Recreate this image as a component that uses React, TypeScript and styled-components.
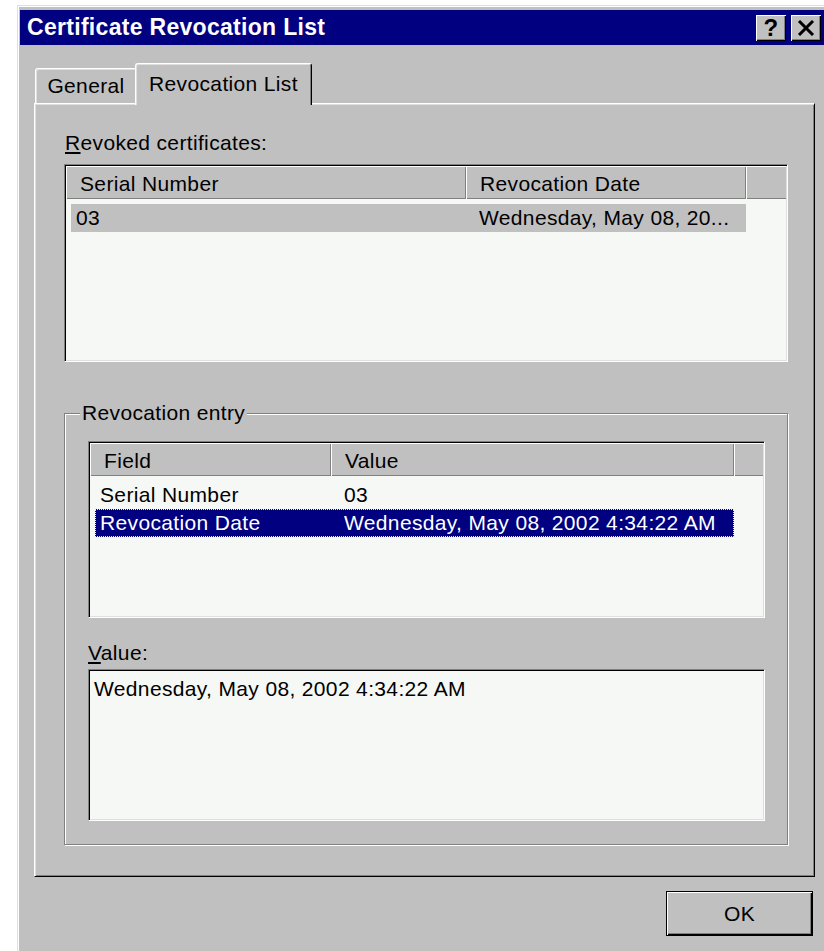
import styled, { createGlobalStyle } from 'styled-components';

type Column = { label: string; width: number };
type Selection = 'focus' | 'inactive';
type Row = { cells: string[]; selected?: Selection };

const revokedColumns: Column[] = [
  { label: 'Serial Number', width: 400 },
  { label: 'Revocation Date', width: 280 },
];

const revokedRows: Row[] = [
  { cells: ['03', 'Wednesday, May 08, 20...'], selected: 'inactive' },
];

const entryColumns: Column[] = [
  { label: 'Field', width: 241 },
  { label: 'Value', width: 403 },
];

const entryRows: Row[] = [
  { cells: ['Serial Number', '03'] },
  { cells: ['Revocation Date', 'Wednesday, May 08, 2002 4:34:22 AM'], selected: 'focus' },
];

const ListView = ({ columns, rows, height }: { columns: Column[]; rows: Row[]; height: number }) => {
  const rowWidth = columns.reduce((sum, c) => sum + c.width, 0) - 5;
  return (
    <Sunken $height={height}>
      <HeaderRow>
        {columns.map((c) => (
          <HeaderCell key={c.label} $width={c.width}>{c.label}</HeaderCell>
        ))}
        <HeaderFiller />
      </HeaderRow>
      <Rows>
        {rows.map((row, i) => (
          <ListRow key={i} $width={rowWidth} $selected={row.selected}>
            {row.cells.map((cell, j) => (
              <Cell key={j} $width={j === 0 ? columns[j].width - 5 : columns[j].width} $first={j === 0}>
                {cell}
              </Cell>
            ))}
          </ListRow>
        ))}
      </Rows>
    </Sunken>
  );
};

// caption-bar close cross
const CloseGlyph = () => (
  <svg width="18" height="16" viewBox="0 0 18 16">
    <path d="M2 1 L16 15 M16 1 L2 15" stroke="#000" strokeWidth="3" fill="none" />
  </svg>
);

const App = () => {
  return (
    <>
      <GlobalStyle />
      <Window>
        <TitleBar>
          <Caption>Certificate Revocation List</Caption>
          <CaptionButtons>
            <CaptionButton>?</CaptionButton>
            <CaptionButton><CloseGlyph /></CaptionButton>
          </CaptionButtons>
        </TitleBar>
        <Body>
          <TabRow>
            <Tab>General</Tab>
            <Tab $active>Revocation List</Tab>
          </TabRow>
          <Panel>
            <Label><u>R</u>evoked certificates:</Label>
            <ListView columns={revokedColumns} rows={revokedRows} height={198} />
            <GroupBox>
              <GroupLegend>Revocation entry</GroupLegend>
              <ListView columns={entryColumns} rows={entryRows} height={177} />
              <ValueLabel><u>V</u>alue:</ValueLabel>
              <ValueBox>Wednesday, May 08, 2002 4:34:22 AM</ValueBox>
            </GroupBox>
          </Panel>
          <Footer>
            <DefaultButton>OK</DefaultButton>
          </Footer>
        </Body>
      </Window>
    </>
  );
};

export default App;

const GlobalStyle = createGlobalStyle`
  html, body {
    margin: 0;
    padding: 0;
    background: #ffffff;
    overflow: hidden;
  }
  body {
    font-family: "Liberation Sans", Arial, sans-serif;
    font-size: 21px;
    letter-spacing: 0.35px;
    color: #000;
  }
`;

const Window = styled.div`
  box-sizing: border-box;
  margin: 5px 0 0 17px;
  width: 812px;
  height: 960px;
  padding: 4px 0 0 2px;
  background: #c0c0c0;
  border-top: 1px solid #dfdfdf;
  border-left: 1px solid #dfdfdf;
  box-shadow: inset 1px 1px #ffffff;
`;

const TitleBar = styled.div`
  height: 35px;
  display: flex;
  align-items: center;
  justify-content: space-between;
  padding: 0 8px 0 7px;
  background: #000080;
`;

const Caption = styled.div`
  color: #ffffff;
  font-weight: bold;
  font-size: 23px;
  letter-spacing: 0.3px;
  white-space: nowrap;
`;

const CaptionButtons = styled.div`
  display: flex;
  gap: 5px;
`;

const CaptionButton = styled.div`
  box-sizing: border-box;
  width: 30px;
  height: 26px;
  display: flex;
  align-items: center;
  justify-content: center;
  padding-top: 1px;
  background: #c0c0c0;
  box-shadow: inset 1px 1px #ffffff, inset -1px -1px #000000, inset -2px -2px #808080;
  font-weight: bold;
  font-size: 24px;
  line-height: 1;
`;

const Body = styled.div`
  padding: 18px 14px 0 14px;
`;

const TabRow = styled.div`
  display: flex;
  align-items: flex-end;
  height: 40px;
  padding-left: 1px;
`;

const Tab = styled.div<{ $active?: boolean }>`
  box-sizing: border-box;
  position: relative;
  z-index: ${(p) => (p.$active ? 1 : 0)};
  display: flex;
  align-items: center;
  justify-content: center;
  width: ${(p) => (p.$active ? 177 : 102)}px;
  height: ${(p) => (p.$active ? 42 : 35)}px;
  margin-left: ${(p) => (p.$active ? -2 : 0)}px;
  margin-bottom: ${(p) => (p.$active ? -2 : 0)}px;
  padding-bottom: ${(p) => (p.$active ? 2 : 0)}px;
  background: #c0c0c0;
  border-top: 1px solid #ffffff;
  border-left: 1px solid #ffffff;
  border-right: 1px solid #000000;
  border-radius: 3px 3px 0 0;
  box-shadow: inset 1px 1px #dfdfdf, inset -1px 0 #808080;
  white-space: nowrap;
`;

const Panel = styled.div`
  box-sizing: border-box;
  padding: 27px 26px 31px 29px;
  border-top: 1px solid #ffffff;
  border-left: 1px solid #ffffff;
  border-right: 1px solid #000000;
  border-bottom: 1px solid #000000;
  box-shadow: inset 1px 1px #dfdfdf, inset -1px -1px #808080;
`;

const Label = styled.div`
  height: 24px;
  line-height: 24px;
  margin: 0 0 9px 1px;
`;

const Sunken = styled.div<{ $height: number }>`
  box-sizing: border-box;
  height: ${(p) => p.$height}px;
  padding: 1px;
  background: #f5f8f5;
  border: 1px solid;
  border-color: #808080 #ffffff #ffffff #808080;
  box-shadow: inset 1px 1px #000000, inset -1px -1px #dfdfdf;
  overflow: hidden;
`;

const HeaderRow = styled.div`
  display: flex;
  height: 33px;
`;

const HeaderCell = styled.div<{ $width: number }>`
  box-sizing: border-box;
  flex: none;
  width: ${(p) => p.$width}px;
  display: flex;
  align-items: center;
  padding: 3px 0 0 14px;
  background: #c0c0c0;
  box-shadow: inset 1px 1px #ffffff, inset -1px -1px #808080;
  white-space: nowrap;
`;

const HeaderFiller = styled.div`
  flex: 1;
  background: #c0c0c0;
  box-shadow: inset 1px 1px #ffffff, inset 0 -1px #808080;
`;

const Rows = styled.div`
  padding: 5px 0 0 5px;
`;

const ListRow = styled.div<{ $width: number; $selected?: Selection }>`
  box-sizing: border-box;
  display: flex;
  width: ${(p) => p.$width}px;
  height: 28px;
  align-items: center;
  background: ${(p) =>
    p.$selected === 'focus' ? '#000080' : p.$selected === 'inactive' ? '#c0c0c0' : 'transparent'};
  color: ${(p) => (p.$selected === 'focus' ? '#ffffff' : '#000000')};
  outline: ${(p) => (p.$selected === 'focus' ? '1px dotted #f0f0c0' : 'none')};
  outline-offset: -1px;
`;

const Cell = styled.div<{ $width: number; $first: boolean }>`
  box-sizing: border-box;
  flex: none;
  width: ${(p) => p.$width}px;
  padding-left: ${(p) => (p.$first ? 5 : 13)}px;
  white-space: nowrap;
  overflow: hidden;
`;

const GroupBox = styled.fieldset`
  margin: 39px 0 0 0;
  padding: 16px 22px 23px 23px;
  border: 1px solid #808080;
  box-shadow: inset 1px 1px #ffffff, 1px 1px #ffffff;
`;

const GroupLegend = styled.legend`
  height: 24px;
  line-height: 24px;
  margin-left: -8px;
  padding: 0 2px;
  background: #c0c0c0;
`;

const ValueLabel = styled.div`
  height: 24px;
  line-height: 24px;
  margin: 23px 0 4px 0;
`;

const ValueBox = styled.div`
  box-sizing: border-box;
  height: 152px;
  padding: 7px 5px;
  line-height: 24px;
  background: #f5f8f5;
  border: 1px solid;
  border-color: #808080 #ffffff #ffffff #808080;
  box-shadow: inset 1px 1px #000000, inset -1px -1px #dfdfdf;
`;

const Footer = styled.div`
  display: flex;
  justify-content: flex-end;
  padding: 14px 2px 0 0;
`;

const DefaultButton = styled.button`
  box-sizing: border-box;
  width: 147px;
  height: 45px;
  background: #c0c0c0;
  border: 1px solid #000000;
  box-shadow: inset 1px 1px #ffffff, inset -1px -1px #000000, inset -2px -2px #808080;
  font-family: "Liberation Sans", Arial, sans-serif;
  font-size: 21px;
  letter-spacing: 0.35px;
  color: #000000;
  padding: 0;
`;
